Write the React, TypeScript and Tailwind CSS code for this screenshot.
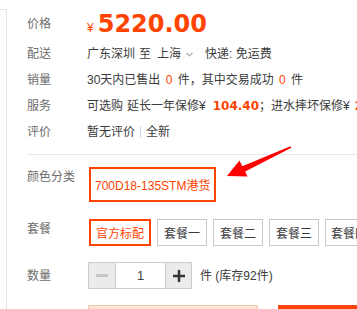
import React from "react";

const Label = ({ children, className = "" }: { children: React.ReactNode; className?: string }) => (
  <div className={"w-[60px] shrink-0 text-[#6c6c6c] " + className}>{children}</div>
);

export default function App() {
  return (
    <div className="relative flex items-start w-[357px] h-[309px] overflow-hidden bg-white text-[12px] leading-[16px] text-[#3c3c3c] font-['Liberation_Sans','Noto_Sans_CJK_SC',sans-serif]">
      <div className="w-[7px] shrink-0 mt-[9px] h-[310px] border-t border-r border-[#e6e6e6]" />
      <div className="flex-1 min-w-0 pl-[20px] whitespace-nowrap">
        {/* price */}
        <div className="flex items-center mt-[7px] h-[34px]">
          <Label>价格</Label>
          <div className="flex items-baseline text-[#ff4400]">
            <span className="text-[12px] mr-[4px]">¥</span>
            <span className="text-[24px] leading-[30px] font-bold font-['DejaVu_Sans',sans-serif]">5220.00</span>
          </div>
        </div>
        {/* delivery */}
        <div className="flex items-center h-[26px]">
          <Label>配送</Label>
          <div className="flex items-center">
            <span>广东深圳</span>
            <span className="ml-[4px]">至</span>
            <span className="ml-[6px]">上海</span>
            <svg className="ml-[5px]" width="7" height="5" viewBox="0 0 7 5">
              <path d="M0.5 0.8 L3.5 3.8 L6.5 0.8" fill="none" stroke="#aaaaaa" strokeWidth="1.2" />
            </svg>
            <span className="ml-[12px]">快递: 免运费</span>
          </div>
        </div>
        {/* sales */}
        <div className="flex items-center h-[26px]">
          <Label>销量</Label>
          <div>
            30天内已售出 <span className="text-[#ff4400] mx-[2px]">0</span> 件，其中交易成功 <span className="text-[#ff4400] mx-[2px]">0</span> 件
          </div>
        </div>
        {/* service */}
        <div className="flex items-center h-[26px]">
          <Label>服务</Label>
          <div className="flex items-center">
            <span>可选购</span>
            <span className="ml-[4px]">延长一年保修¥</span>
            <span className="ml-[7px] text-[#ff4400] font-bold font-['DejaVu_Sans',sans-serif]">104.40</span>
            <span>；进水摔坏保修¥</span>
            <span className="ml-[5px] text-[#ff4400] font-bold font-['DejaVu_Sans',sans-serif]">204.40</span>
          </div>
        </div>
        {/* review */}
        <div className="flex items-center h-[26px]">
          <Label>评价</Label>
          <div className="flex items-center">
            <span>暂无评价</span>
            <span className="mx-[5px] w-px h-[12px] bg-[#c9d8e6]" />
            <span>全新</span>
          </div>
        </div>
        <div className="mt-[9px] border-t border-[#e8e8e8]" />
        {/* color */}
        <div className="flex items-start mt-[12px]">
          <Label className="leading-[20px]">颜色分类</Label>
          <div className="ml-[2px] h-[35px] px-[4px] flex items-center pt-[2px] border-2 border-[#ff4400] text-[#ff4400]">
            700D18-135STM港货
          </div>
        </div>
        {/* package */}
        <div className="flex items-start mt-[17px]">
          <Label className="leading-[20px]">套餐</Label>
          <div className="ml-[2px] flex gap-[6px]">
            <div className="h-[27px] w-[62px] shrink-0 flex items-center justify-center pt-[2px] border-2 border-[#ff4400] text-[#ff4400]">官方标配</div>
            <div className="h-[27px] w-[50px] shrink-0 flex items-center justify-center pt-[2px] border border-[#c8c8c8]">套餐一</div>
            <div className="h-[27px] w-[50px] shrink-0 flex items-center justify-center pt-[2px] border border-[#c8c8c8]">套餐二</div>
            <div className="h-[27px] w-[50px] shrink-0 flex items-center justify-center pt-[2px] border border-[#c8c8c8]">套餐三</div>
            <div className="h-[27px] w-[50px] shrink-0 flex items-center justify-start pl-[5px] pt-[2px] border border-[#c8c8c8]">套餐四</div>
          </div>
        </div>
        {/* quantity */}
        <div className="flex items-center mt-[16px]">
          <Label>数量</Label>
          <div className="ml-[1px] flex h-[27px]">
            <div className="w-[28px] h-full border border-[#cccccc] bg-[#ebebeb] flex items-center justify-center">
              <div className="w-[12px] h-[3px] bg-[#c6c6c6]" />
            </div>
            <div className="w-[49px] h-full border-y border-[#cccccc] flex items-center justify-center text-[13px] text-[#3c3c3c]">1</div>
            <div className="w-[27px] h-full border border-[#cccccc] bg-[#ebebeb] flex items-center justify-center">
              <svg width="12" height="12" viewBox="0 0 12 12">
                <rect x="0" y="4.75" width="12" height="2.5" fill="#333333" />
                <rect x="4.75" y="0" width="2.5" height="12" fill="#333333" />
              </svg>
            </div>
          </div>
          <span className="ml-[8px]">件 (库存92件)</span>
        </div>
        {/* buttons */}
        <div className="flex mt-[16px] ml-[61px] gap-[20px]">
          <div className="w-[170px] h-[40px] shrink-0 border border-[#f0c9b2] bg-[#ffe4d0]" />
          <div className="w-[100px] h-[40px] shrink-0 border border-[#f0491c] bg-[#ff4400]" />
        </div>
      </div>
      <svg className="absolute inset-0 pointer-events-none" width="357" height="309" viewBox="0 0 357 309">
        <polygon
          points="227,176 239.5,160.5 242.3,166.2 290.5,146.2 291.3,147.8 245.2,171.5 247.5,176.5"
          fill="#ff0000"
        />
      </svg>
    </div>
  );
}
